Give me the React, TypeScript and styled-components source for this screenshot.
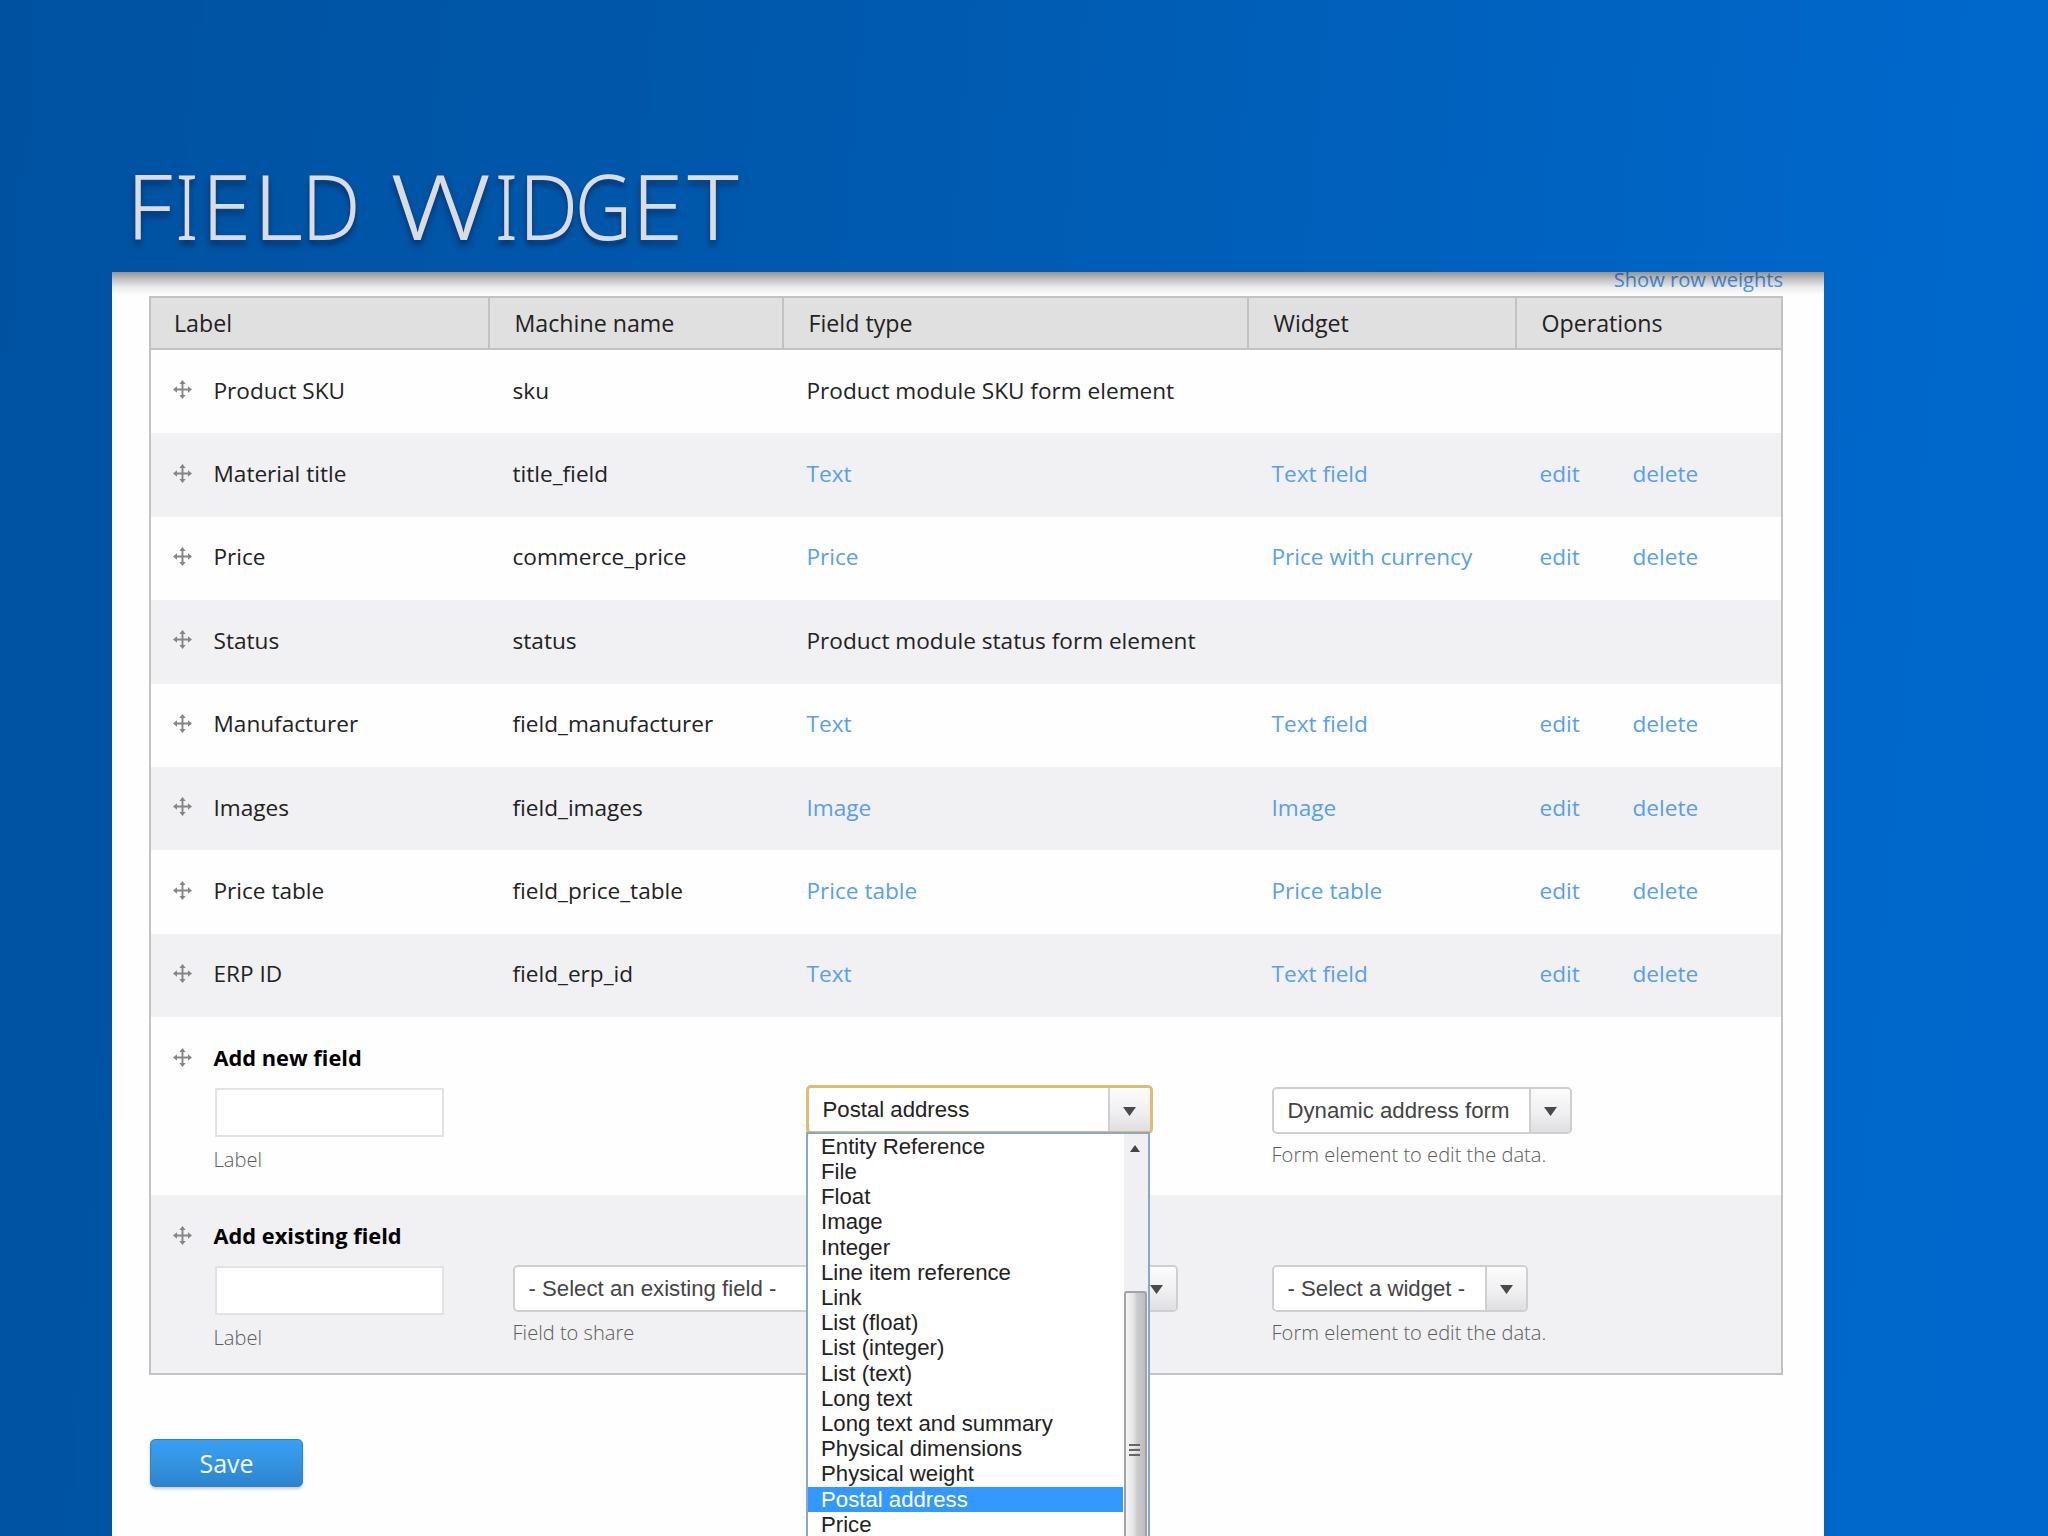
import React from "react";
import styled, { createGlobalStyle, css } from "styled-components";

const GlobalStyle = createGlobalStyle`
  * { box-sizing: border-box; }
  html, body { margin: 0; padding: 0; }
  body {
    height: 1536px;
    overflow: hidden;
    font-family: "Open Sans", "Noto Sans", sans-serif;
    font-size: 22.6px;
    color: #222;
  }
`;

const Slide = styled.main`
  width: 2048px;
  height: 1536px;
  overflow: hidden;
  padding: 0 0 0 112px;
  display: flex;
  flex-direction: column;
  background: linear-gradient(95deg, #0052a1 0%, #0055a6 18%, #005aaf 42%, #0061bd 66%, #0067ca 88%, #0068cd 100%);
`;

const Title = styled.h1`
  margin: 0;
  height: 272px;
  flex: none;
  padding: 145px 0 0 14px;
  display: flex;
  font-family: "Noto Sans", "Open Sans", sans-serif;
  font-weight: 300;
  font-size: 90px;
  line-height: 120px;
  color: #dcdcde;
  text-shadow: 0 5px 6px rgba(0, 20, 60, 0.5);
`;

const Word = styled.span`
  display: flex;
  margin-right: 30px;
`;

const Glyph = styled.span<{ $w: number; $stretch: number }>`
  width: ${(p) => p.$w}px;
  display: flex;
  justify-content: center;
  transform: scaleX(${(p) => p.$stretch});
`;

const Panel = styled.section`
  position: relative;
  width: 1712px;
  flex: 1;
  background: #fefefe;
  padding: 0 41px 0 37px;
  display: flex;
  flex-direction: column;
  &::after {
    content: "";
    position: absolute;
    inset: 0 0 auto 0;
    height: 24px;
    background: linear-gradient(rgba(0, 0, 0, 0.42), rgba(0, 0, 0, 0.24) 30%, rgba(0, 0, 0, 0.07) 65%, rgba(0, 0, 0, 0));
  }
`;

const WeightsLink = styled.a`
  align-self: flex-end;
  height: 24px;
  line-height: 16px;
  font-size: 20.1px;
  color: #4d9df5;
`;

const Table = styled.div`
  flex: none;
  border: 2px solid #c2c2c2;
`;

const columns = css`
  display: grid;
  grid-template-columns: 339px 294px 465px 268px 1fr;
`;

const HeadRow = styled.div`
  ${columns}
  height: 52px;
  background: #e0e0e0;
  border-bottom: 2px solid #c2c2c2;
`;

const HeadCell = styled.div`
  padding-left: 24.5px;
  font-size: 23.2px;
  line-height: 51px;
  border-right: 2px solid #c2c2c2;
  &:first-child { padding-left: 23px; }
  &:last-child { border-right: 0; }
`;

const Row = styled.div<{ $odd?: boolean }>`
  ${columns}
  height: 83.4px;
  padding-bottom: 3px;
  align-items: center;
  background: ${(p) => (p.$odd ? "#f1f0f2" : "transparent")};
`;

const Cell = styled.div`
  padding-left: 22.5px;
  display: flex;
  align-items: center;
  white-space: nowrap;
`;

const Link = styled.a`
  color: #57a0ef;
`;

const EditLink = styled(Link)`
  width: 93px;
`;

const Handle = styled.span`
  width: 40px;
  flex: none;
  display: flex;
  align-items: center;
  margin: 0 1px 0 -1px;
  padding-bottom: 1px;
`;

const FormRow = styled.div<{ $odd?: boolean }>`
  ${columns}
  height: 178px;
  background: ${(p) => (p.$odd ? "#f1f0f2" : "transparent")};
`;

const NameCell = styled.div`
  padding: 22px 0 0 22.5px;
  display: flex;
`;

const NameStack = styled.div`
  display: flex;
  flex-direction: column;
  white-space: nowrap;
`;

const FormHandle = styled(Handle)`
  height: 38px;
`;

const FieldTitle = styled.strong`
  font-weight: 700;
  font-size: 21.8px;
  line-height: 37px;
  color: #000;
`;

const TextInput = styled.input`
  width: 229px;
  height: 49px;
  margin: 12px 0 0 1px;
  border: 2px solid #e2e1e3;
  background: #fff;
`;

const Hint = styled.span<{ $top: number }>`
  margin-top: ${(p) => p.$top}px;
  font-weight: 300;
  font-size: 20.1px;
  line-height: 28px;
  color: #5c5c5c;
  white-space: nowrap;
`;

const ControlCell = styled.div`
  position: relative;
  padding: 69.5px 0 0 22.5px;
  display: flex;
  flex-direction: column;
  align-items: flex-start;
`;

const Select = styled.div<{ $w: number; $focus?: boolean }>`
  width: ${(p) => p.$w}px;
  height: 47px;
  flex: none;
  display: flex;
  font-family: "Liberation Sans", Arial, sans-serif;
  font-size: 22.2px;
  line-height: 43px;
  white-space: nowrap;
  color: ${(p) => (p.$focus ? "#222" : "#444")};
  background: #fff;
  border: 2px solid #cfced0;
  border-radius: 5px;
  overflow: hidden;
  ${(p) =>
    p.$focus &&
    css`
      height: 49px;
      margin: -1.5px 0 0 -1px;
      border: 3px solid #dfbd6f;
    `}
`;

const SelectValue = styled.span`
  flex: 1;
  padding-left: 14px;
`;

const SelectButton = styled.span<{ $w: number }>`
  width: ${(p) => p.$w}px;
  display: flex;
  align-items: center;
  justify-content: center;
  padding-top: 3px;
  border-left: 2px solid #cfced0;
  background: linear-gradient(#fcfcfc, #f0eff1 55%, #dfdee0);
`;

const Menu = styled.div`
  position: absolute;
  z-index: 2;
  left: 21.5px;
  top: 114.8px;
  width: 344px;
  height: 420px;
  display: flex;
  border: 2px solid #86a8cf;
  background: #fff;
  font-family: "Liberation Sans", Arial, sans-serif;
  font-size: 22.2px;
  line-height: 25.2px;
  color: #222;
`;

const Options = styled.ul`
  list-style: none;
  margin: 0;
  padding: 0;
  width: 315px;
`;

const Option = styled.li<{ $active?: boolean }>`
  height: 25.2px;
  padding-left: 13.5px;
  white-space: nowrap;
  background: ${(p) => (p.$active ? "#3399ff" : "transparent")};
  color: ${(p) => (p.$active ? "#fff" : "inherit")};
`;

const Scrollbar = styled.div`
  flex: 1;
  margin-left: 1px;
  padding-right: 1px;
  display: flex;
  flex-direction: column;
  background: #f0eff1;
`;

const ScrollUp = styled.div`
  height: 157px;
  padding-top: 11px;
  display: flex;
  justify-content: center;
`;

const Thumb = styled.div`
  flex: 1;
  padding-top: 151px;
  padding-right: 2px;
  display: flex;
  justify-content: center;
  border: 2px solid #a3a3a6;
  border-bottom: 0;
  border-radius: 3px 3px 0 0;
  background: linear-gradient(90deg, #f4f4f4, #e4e4e6 40%, #c9c9cc 60%, #bdbdc1);
`;

const SaveButton = styled.button`
  margin: 64px 0 0 1px;
  width: 153px;
  height: 48px;
  padding: 0;
  border: 1px solid #2f82c6;
  border-radius: 5px;
  background: linear-gradient(#379ff2, #3595e3 45%, #2c84cd);
  box-shadow: 0 2px 3px rgba(0, 0, 0, 0.2);
  font-family: "Open Sans", sans-serif;
  font-size: 25px;
  line-height: 44px;
  color: #f3f9ff;
`;

const MoveIcon = () => (
  <svg width="19" height="19" viewBox="0 0 20 20" fill="#858585">
    <path d="M9 3h2v14H9z M3 9h14v2H3z" />
    <path d="M10 0l3.3 4.2H6.7z M10 20l3.3-4.2H6.7z M0 10l4.2-3.3v6.6z M20 10l-4.2-3.3v6.6z" />
  </svg>
);

const DownArrow = () => (
  <svg width="13" height="9" viewBox="0 0 13 9">
    <path d="M0 0h13L6.5 9z" fill="#4a4a4a" />
  </svg>
);

type Letter = [string, number, number];
const words: Letter[][] = [
  [["F", 47, 1.02], ["I", 28, 0.85], ["E", 51, 1.0], ["L", 52, 1.08], ["D", 54, 0.93]],
  [["W", 105, 1.25], ["I", 27, 0.85], ["D", 57, 0.93], ["G", 53, 0.88], ["E", 55, 1.04], ["T", 56, 1.08]],
];

type Field = { label: string; name: string; type: string; widget?: string };
const fields: Field[] = [
  { label: "Product SKU", name: "sku", type: "Product module SKU form element" },
  { label: "Material title", name: "title_field", type: "Text", widget: "Text field" },
  { label: "Price", name: "commerce_price", type: "Price", widget: "Price with currency" },
  { label: "Status", name: "status", type: "Product module status form element" },
  { label: "Manufacturer", name: "field_manufacturer", type: "Text", widget: "Text field" },
  { label: "Images", name: "field_images", type: "Image", widget: "Image" },
  { label: "Price table", name: "field_price_table", type: "Price table", widget: "Price table" },
  { label: "ERP ID", name: "field_erp_id", type: "Text", widget: "Text field" },
];

const fieldTypes = [
  "Entity Reference", "File", "Float", "Image", "Integer", "Line item reference", "Link", "List (float)",
  "List (integer)", "List (text)", "Long text", "Long text and summary", "Physical dimensions",
  "Physical weight", "Postal address", "Price",
];

const Dropdown = ({ value, width, button = 41, focus }: { value: string; width: number; button?: number; focus?: boolean }) => (
  <Select $w={width} $focus={focus}>
    <SelectValue>{value}</SelectValue>
    <SelectButton $w={button}><DownArrow /></SelectButton>
  </Select>
);

const NewName = ({ title }: { title: string }) => (
  <NameCell>
    <FormHandle><MoveIcon /></FormHandle>
    <NameStack>
      <FieldTitle>{title}</FieldTitle>
      <TextInput aria-label={title} />
      <Hint $top={9}>Label</Hint>
    </NameStack>
  </NameCell>
);

export default function App() {
  return (
    <>
      <GlobalStyle />
      <Slide>
        <Title>
          {words.map((word, i) => (
            <Word key={i}>
              {word.map(([ch, w, s], j) => (
                <Glyph key={j} $w={w} $stretch={s}>{ch}</Glyph>
              ))}
            </Word>
          ))}
        </Title>
        <Panel>
          <WeightsLink>Show row weights</WeightsLink>
          <Table>
            <HeadRow>
              {["Label", "Machine name", "Field type", "Widget", "Operations"].map((h) => (
                <HeadCell key={h}>{h}</HeadCell>
              ))}
            </HeadRow>
            {fields.map((f, i) => (
              <Row key={f.name} $odd={i % 2 === 1}>
                <Cell><Handle><MoveIcon /></Handle>{f.label}</Cell>
                <Cell>{f.name}</Cell>
                <Cell>{f.widget ? <Link>{f.type}</Link> : f.type}</Cell>
                <Cell>{f.widget && <Link>{f.widget}</Link>}</Cell>
                <Cell>{f.widget && <><EditLink>edit</EditLink><Link>delete</Link></>}</Cell>
              </Row>
            ))}
            <FormRow>
              <NewName title="Add new field" />
              <div />
              <ControlCell>
                <Dropdown value="Postal address" width={347} button={42} focus />
                <Menu>
                  <Options>
                    {fieldTypes.map((t) => (
                      <Option key={t} $active={t === "Postal address"}>{t}</Option>
                    ))}
                  </Options>
                  <Scrollbar>
                    <ScrollUp>
                      <svg width="10" height="7" viewBox="0 0 10 7"><path d="M5 0l5 7H0z" fill="#444" /></svg>
                    </ScrollUp>
                    <Thumb>
                      <svg width="11" height="13" viewBox="0 0 11 13">
                        <path d="M0 1h11M0 6h11M0 11h11" stroke="#666" strokeWidth="2" />
                        <path d="M0 3h11M0 8h11" stroke="#eee" strokeWidth="1" />
                      </svg>
                    </Thumb>
                  </Scrollbar>
                </Menu>
              </ControlCell>
              <ControlCell>
                <Dropdown value="Dynamic address form" width={300} />
                <Hint $top={7}>Form element to edit the data.</Hint>
              </ControlCell>
              <div />
            </FormRow>
            <FormRow $odd>
              <NewName title="Add existing field" />
              <ControlCell>
                <Dropdown value="- Select an existing field -" width={665} />
                <Hint $top={7}>Field to share</Hint>
              </ControlCell>
              <div />
              <ControlCell>
                <Dropdown value="- Select a widget -" width={256} />
                <Hint $top={7}>Form element to edit the data.</Hint>
              </ControlCell>
              <div />
            </FormRow>
          </Table>
          <SaveButton>Save</SaveButton>
        </Panel>
      </Slide>
    </>
  );
}
